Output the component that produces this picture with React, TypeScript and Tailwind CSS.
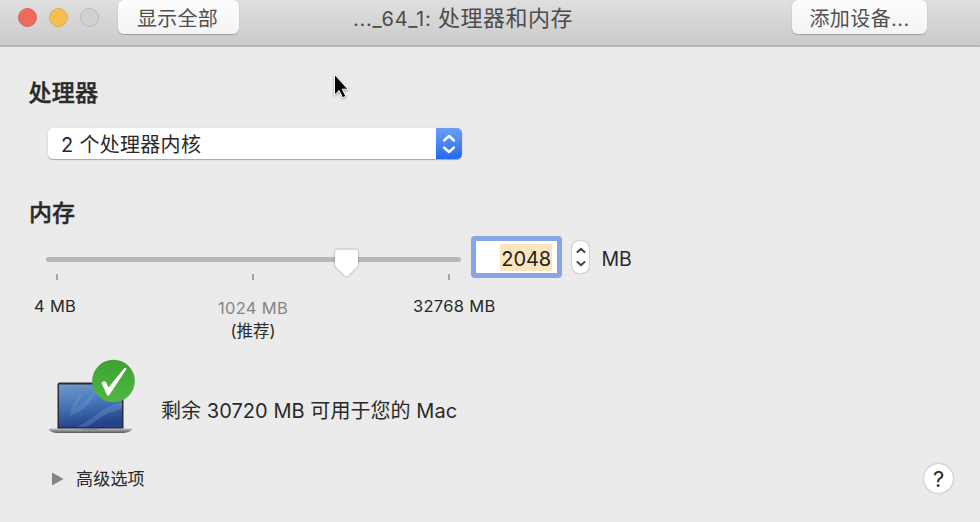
import type { ReactNode } from "react";

function ToolbarButton({ children, className }: { children: ReactNode; className: string }) {
  return (
    <button
      className={`flex h-[34px] items-center justify-center rounded-[6px] bg-gradient-to-b from-[#fdfdfd] to-[#f4f4f4] pt-[4px] text-[20px] leading-none text-[#505050] shadow-[0_1px_1px_rgba(0,0,0,0.22),0_0_1px_rgba(0,0,0,0.18)] ${className}`}
    >
      {children}
    </button>
  );
}

function TitleBar() {
  return (
    <header className="flex h-[47px] items-start border-b-2 border-[#b9b9b9] bg-gradient-to-b from-[#dfdfdf] to-[#cbcbcb]">
      <div className="flex gap-3 pt-[8px] pl-[17.5px]">
        <span className="size-[19px] rounded-full border border-[#d9655c] bg-[#ed6a5f]" />
        <span className="size-[19px] rounded-full border border-[#deae48] bg-[#f5bf4f]" />
        <span className="size-[19px] rounded-full border border-[#b9b9b9] bg-[#d0d0d0]" />
      </div>
      <ToolbarButton className="ml-[19.5px] w-[121px] pr-[2px] tracking-[0.3px]">显示全部</ToolbarButton>
      <h1 className="ml-[114px] w-[220px] pt-[3px] text-[22px] leading-[30px] font-normal whitespace-nowrap text-[#4c4c4c]">
        <span className="inline-block w-[85px] text-[20px] tracking-[0.75px]">..._64_1:</span>
        <span className="tracking-[0.5px]">处理器和内存</span>
      </h1>
      <ToolbarButton className="ml-[219px] w-[135px] tracking-[0.4px]">添加设备...</ToolbarButton>
    </header>
  );
}

function Select() {
  return (
    <div className="ml-[48px] flex h-[31px] w-[414px] overflow-hidden rounded-[5px] bg-white shadow-[0_1px_1px_rgba(0,0,0,0.28),0_0_1px_rgba(0,0,0,0.2)]">
      <span className="flex-1 pl-[13px] text-[20px] leading-[35px] tracking-[0.3px]">2 个处理器内核</span>
      <span className="flex w-[26px] items-center justify-center bg-gradient-to-b from-[#6ba0f5] to-[#2468ee]">
        <svg width="14" height="22" viewBox="0 0 14 22" fill="none" stroke="white" strokeWidth="2.4" strokeLinecap="round" strokeLinejoin="round">
          <path d="M2 7.500 7 3l5 4.500M2 14.500l5 4.500 5-4.500" />
        </svg>
      </span>
    </div>
  );
}

function MemorySlider() {
  return (
    <div className="relative ml-[46px] flex h-[42px] w-[415px] items-center">
      <div className="mt-[4px] h-[5px] w-full rounded-full bg-[#b8b8b8]" />
      <svg className="absolute top-[11px] left-[286px] drop-shadow-[0_0.5px_1px_rgba(0,0,0,0.4)]" width="29" height="31" viewBox="0 0 29 31">
        <path d="M6 2.500h17q3 0 3 3v12q0 1.400-1 2.400l-9 9q-1.500 1.300-3 0l-9-9q-1-1-1-2.400v-12q0-3 3-3z" fill="white" />
      </svg>
    </div>
  );
}

function MemoryRow() {
  return (
    <div className="flex h-[42px] items-center">
      <MemorySlider />
      <div className="ml-[10px] flex h-[42px] w-[91px] items-center justify-end rounded-[4px] border-[5px] border-[#87a6e6] bg-white pr-[5px]">
        <span className="bg-[#fae5bf] px-[1px] pt-[3px] text-[20px] leading-[24px] tracking-[-0.1px] text-[#1d1d1d]">2048</span>
      </div>
      <div className="ml-[10px] flex h-[32px] w-[17px] items-center justify-center rounded-[7px] bg-white shadow-[0_0_1.5px_rgba(0,0,0,0.5)]">
        <svg width="12" height="24" viewBox="0 0 12 24" fill="none" stroke="#484848" strokeWidth="2" strokeLinecap="round" strokeLinejoin="round">
          <path d="M2.500 7 6 3.700 9.500 7M2.500 17 6 20.300 9.500 17" />
        </svg>
      </div>
      <span className="ml-[12.5px] pt-[4px] text-[19.5px] leading-[30px]">MB</span>
    </div>
  );
}

function Laptop() {
  return (
    <svg width="92" height="80" viewBox="0 0 92 80">
      <defs>
        <linearGradient id="screen" x1="0" y1="0" x2="0.2" y2="1">
          <stop offset="0" stopColor="#7198ca" />
          <stop offset="0.5" stopColor="#4776b8" />
          <stop offset="1" stopColor="#25438c" />
        </linearGradient>
        <linearGradient id="base" x1="0" y1="0" x2="0" y2="1">
          <stop offset="0" stopColor="#c0c0c2" />
          <stop offset="1" stopColor="#59595c" />
        </linearGradient>
        <linearGradient id="badge" x1="0" y1="0" x2="0" y2="1">
          <stop offset="0" stopColor="#3da132" />
          <stop offset="1" stopColor="#50b842" />
        </linearGradient>
      </defs>
      <rect x="12.500" y="23.500" width="66" height="48" rx="2" fill="#2b2c33" />
      <rect x="14" y="25.500" width="63" height="42.500" fill="url(#screen)" />
      <path d="M25 57Q27 41 38 33Q34 44 31 48Q43 41 50 32Q46 49 25 57Z" fill="#a0c0df" opacity=".18" />
      <path d="M32 68Q46 60 55 53T77 43V50Q62 53 52 61T38 68Z" fill="#8db2df" opacity=".25" />
      <path d="M4 69.500h83v1.500q-4 3-8 3H12q-5 0-8-3z" fill="url(#base)" />
      <path d="M38 69.500h15v1.200H38z" fill="#77777a" />
      <circle cx="68.500" cy="22" r="21.300" fill="url(#badge)" />
      <path d="M56.500 24q2-3 4.500-1l2.500 5.500 15.500-19q1.500-1.500 2.500.5L65 35q-2 3.500-3.500 0z" fill="white" />
    </svg>
  );
}

export default function App() {
  return (
    <main className="h-[522px] w-[980px] overflow-hidden bg-[#ebebeb] font-['Inter','Noto_Sans_CJK_SC',sans-serif] text-[#292929]">
      <TitleBar />
      <section className="relative pt-[30px]">
        <h2 className="ml-[28.500px] h-[51px] text-[23px] leading-[32px] font-medium tracking-[0.3px] [-webkit-text-stroke:0.4px_#292929]">处理器</h2>
        <Select />
        <svg className="absolute top-[24px] left-[330.500px] drop-shadow-[0_1px_1px_rgba(0,0,0,0.35)]" width="22" height="32" viewBox="0 0 22 32">
          <path d="M3.500 3.500V24l4.600-4.500 3.500 7.300 3.200-1.600-3.500-7H17z" fill="black" stroke="white" strokeWidth="1" />
        </svg>
      </section>
      <section className="pt-[38px]">
        <h2 className="ml-[29px] h-[39px] text-[23px] leading-[32px] font-medium [-webkit-text-stroke:0.4px_#292929]">内存</h2>
        <MemoryRow />
        <div className="-mt-[4px] ml-[56px] flex h-[7px] w-[394px] justify-between">
          <span className="h-[6px] w-[2px] bg-[#a8a8a8]" />
          <span className="h-[6px] w-[2px] bg-[#a0a0a0]" />
          <span className="h-[6px] w-[2px] bg-[#a8a8a8]" />
        </div>
        <div className="flex h-[78px] pt-[14px] pl-[34px] text-[16.5px] leading-[23px] tracking-[0.3px] whitespace-nowrap">
          <span className="w-[183px]">4 MB</span>
          <div className="w-[72px] pt-[2px] text-center">
            <div className="text-[#858585]">1024 MB</div>
            <div className="tracking-normal">(推荐)</div>
          </div>
          <span className="ml-[124px]">32768 MB</span>
        </div>
      </section>
      <section className="flex h-[86px] items-start pl-[45px]">
        <Laptop />
        <p className="ml-[24px] pt-[37px] text-[20px] leading-[30px] tracking-[0.05px] whitespace-nowrap">剩余 30720 MB 可用于您的 Mac</p>
      </section>
      <footer className="flex items-center pt-[18px] pr-[27px] pl-[51px]">
        <svg width="13" height="14" viewBox="0 0 13 14">
          <path d="M1 .5v13L12.500 7z" fill="#858585" />
        </svg>
        <span className="ml-[12px] pt-[1px] text-[17px] leading-[30px] tracking-[0.2px]">高级选项</span>
        <button className="ml-auto flex size-[29px] items-center justify-center rounded-full bg-white text-[22px] leading-none font-normal shadow-[0_0_2px_rgba(0,0,0,0.4)]">
          ?
        </button>
      </footer>
    </main>
  );
}
